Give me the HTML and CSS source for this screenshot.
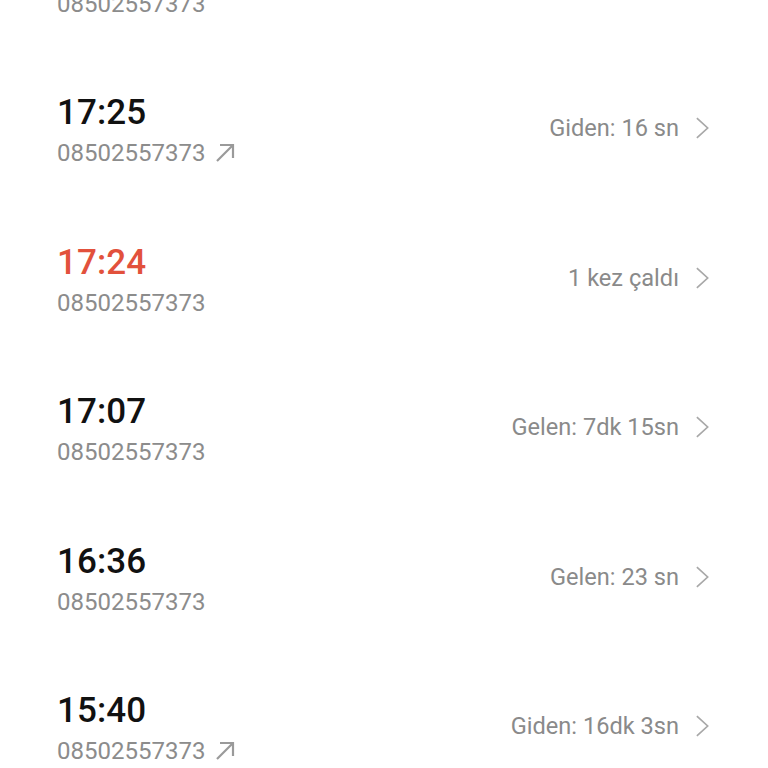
FILE: index.html
```html
<!DOCTYPE html>
<html lang="tr">
<head>
<meta charset="utf-8">
<link rel="stylesheet" href="styles.css">
</head>
<body>
<div class="list">
  <div class="row">
    <div class="left"><div class="time">17:26</div><div class="num">08502557373</div></div>
    <div class="right"><span class="status">Gelen: 12 sn</span><svg class="chev" viewBox="0 0 16 24"><path d="M2 1.5 L13.5 12 L2 22.5"/></svg></div>
  </div>
  <div class="row">
    <div class="left"><div class="time">17:25</div><div class="num">08502557373<svg class="out" viewBox="0 0 20 20"><path d="M2 18 L18 2 M5 2 H18 V15"/></svg></div></div>
    <div class="right"><span class="status">Giden: 16 sn</span><svg class="chev" viewBox="0 0 16 24"><path d="M2 1.5 L13.5 12 L2 22.5"/></svg></div>
  </div>
  <div class="row">
    <div class="left"><div class="time missed">17:24</div><div class="num">08502557373</div></div>
    <div class="right"><span class="status">1 kez çaldı</span><svg class="chev" viewBox="0 0 16 24"><path d="M2 1.5 L13.5 12 L2 22.5"/></svg></div>
  </div>
  <div class="row">
    <div class="left"><div class="time">17:07</div><div class="num">08502557373</div></div>
    <div class="right"><span class="status">Gelen: 7dk 15sn</span><svg class="chev" viewBox="0 0 16 24"><path d="M2 1.5 L13.5 12 L2 22.5"/></svg></div>
  </div>
  <div class="row">
    <div class="left"><div class="time">16:36</div><div class="num">08502557373</div></div>
    <div class="right"><span class="status">Gelen: 23 sn</span><svg class="chev" viewBox="0 0 16 24"><path d="M2 1.5 L13.5 12 L2 22.5"/></svg></div>
  </div>
  <div class="row">
    <div class="left"><div class="time">15:40</div><div class="num">08502557373<svg class="out" viewBox="0 0 20 20"><path d="M2 18 L18 2 M5 2 H18 V15"/></svg></div></div>
    <div class="right"><span class="status">Giden: 16dk 3sn</span><svg class="chev" viewBox="0 0 16 24"><path d="M2 1.5 L13.5 12 L2 22.5"/></svg></div>
  </div>
</div>
</body>
</html>
```
FILE: styles.css
```css
html, body {
  margin: 0;
  padding: 0;
  background: #ffffff;
  overflow: hidden;
}
body {
  font-family: Roboto, "Noto Sans", sans-serif;
  width: 768px;
  height: 768px;
}
.list {
  margin-top: -94.75px;
}
.row {
  height: 149.5px;
  box-sizing: border-box;
  padding: 0 58px 0 57px;
  display: flex;
  align-items: center;
  justify-content: space-between;
}
.left {
  display: flex;
  flex-direction: column;
}
.time {
  font-size: 35px;
  font-weight: 500;
  line-height: 44px;
  color: #111111;
  letter-spacing: 0.1px;
}
.time.missed {
  color: #e2513c;
}
.num {
  margin-top: 3px;
  font-size: 24px;
  line-height: 30px;
  color: #8c8c8c;
  display: flex;
  align-items: center;
}
.out {
  width: 20px;
  height: 20px;
  margin-left: 10px;
  fill: none;
  stroke: #9a9a9a;
  stroke-width: 2.2;
}
.right {
  display: flex;
  align-items: center;
  margin-bottom: 3px;
}
.status {
  font-size: 23.6px;
  color: #8a8a8a;
}
.chev {
  width: 15px;
  height: 24px;
  margin-left: 16px;
  fill: none;
  stroke: #a8a8a8;
  stroke-width: 1.8;
}
```
